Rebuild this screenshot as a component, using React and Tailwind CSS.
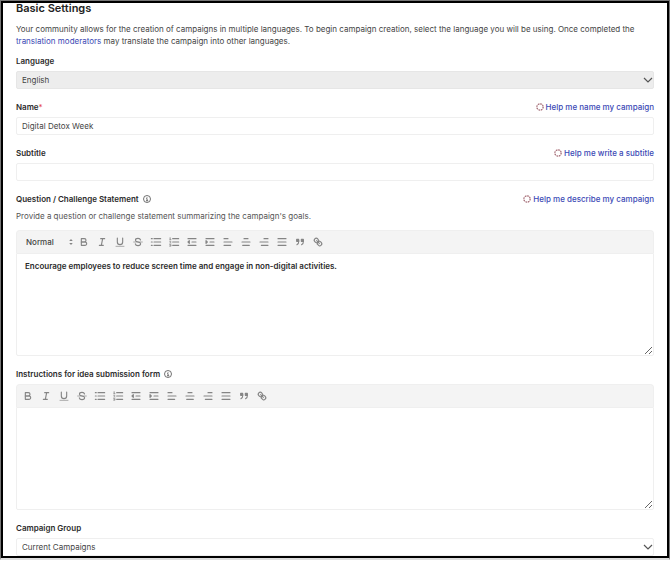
import React from "react";

const ICONS = {
  Bold: (
    <>
      <path d="M5,4H9.5A2.5,2.5,0,0,1,12,6.5v0A2.5,2.5,0,0,1,9.5,9H5A0,0,0,0,1,5,9V4A0,0,0,0,1,5,4Z" />
      <path d="M5,9h5.5A2.5,2.5,0,0,1,13,11.5v0A2.5,2.5,0,0,1,10.5,14H5a0,0,0,0,1,0,0V9A0,0,0,0,1,5,9Z" />
    </>
  ),
  Italic: <path d="M7 4H13M5 14H11M8 14L10 4" />,
  Underline: (
    <>
      <path d="M5,3V9a4.012,4.012,0,0,0,4,4H9a4.012,4.012,0,0,0,4-4V3" />
      <path d="M3 15.5H15" strokeWidth="1" />
    </>
  ),
  Strikethrough: (
    <>
      <path d="M2.5 9H15.5" strokeWidth="1" />
      <path d="M12.8 6C12.3 4.2 10.9 3.6 9 3.6C6.6 3.6 5.2 4.8 5.2 6.4C5.2 8 6.8 8.6 9 9C11.4 9.4 12.9 10.1 12.9 11.7C12.9 13.4 11.3 14.4 9 14.4C6.8 14.4 5.3 13.6 5 11.8" />
    </>
  ),
  "Bulleted list": <path d="M6 4H16M6 9H16M6 14H16M2 4H3.4M2 9H3.4M2 14H3.4" />,
  "Numbered list": (
    <>
      <path d="M7 4H16M7 9H16M7 14H16" />
      <path d="M2.5 5.5H4.5M3.5 5.5V2.5L2.5 3M2.5 8H4.3V9L2.5 10.5H4.5M2.5 12.8H4.4V15.4H2.5M3 14H4.4" strokeWidth="1" />
    </>
  ),
  Outdent: <path d="M3 14H15M3 4H15M9 9H15M5 7V11L3 9Z" />,
  Indent: <path d="M3 14H15M3 4H15M9 9H15M3 7V11L5 9Z" />,
  "Align left": <path d="M3 9H15M3 14H13M3 4H9" />,
  "Align center": <path d="M15 9H3M14 14H4M12 4H6" />,
  "Align right": <path d="M15 9H3M15 14H5M15 4H9" />,
  Justify: <path d="M15 9H3M15 14H3M15 4H3" />,
  Quote: (
    <>
      <path d="M4 5H7V8H4ZM11 5H14V8H11Z" fill="currentColor" />
      <path d="M7.3 7C7.3 10 6.5 12 4.3 13M14.3 7C14.3 10 13.5 12 11.3 13" strokeWidth="1.6" />
    </>
  ),
  Link: (
    <>
      <path d="M7 7L11 11" />
      <path d="M8.9 4.577a3.476 3.476 0 0 1 .36 4.679A3.476 3.476 0 0 1 4.577 8.9C3.185 7.5 2.035 6.4 4.217 4.217S7.5 3.185 8.9 4.577Z" />
      <path d="M13.423 9.1a3.476 3.476 0 0 0-4.679-.36 3.476 3.476 0 0 0 .36 4.679c1.392 1.392 2.5 2.542 4.679.36S14.815 10.5 13.423 9.1Z" />
    </>
  ),
};

function ToolIcon({ name }) {
  return (
    <svg viewBox="0 0 18 18" className="size-3" fill="none" stroke="currentColor" strokeWidth="1.7" strokeLinecap="round" strokeLinejoin="round" aria-hidden="true">
      {ICONS[name]}
    </svg>
  );
}

function Toolbar({ withFormat }) {
  return (
    <div className="flex h-[23px] items-center rounded-t-sm border border-b-0 border-[#efefef] bg-[#f4f4f4] px-[2px] text-[#858585]">
      {withFormat && (
        <div className="relative ml-[7px] w-[49px] shrink-0">
          <select aria-label="Text format" className="block w-full appearance-none bg-transparent text-[8px] leading-3 font-medium text-[#444] outline-none">
            <option>Normal</option>
          </select>
          <svg viewBox="0 0 18 18" className="pointer-events-none absolute top-[2px] right-0 size-2" fill="currentColor" aria-hidden="true">
            <path d="M5 11.5L9 16L13 11.5ZM5 6.5L9 2L13 6.5Z" />
          </svg>
        </div>
      )}
      {Object.keys(ICONS).map((name) => (
        <button key={name} type="button" aria-label={name} className="flex h-4 w-[18px] shrink-0 items-center justify-center">
          <ToolIcon name={name} />
        </button>
      ))}
    </div>
  );
}

function InfoIcon() {
  return (
    <svg viewBox="0 0 16 16" className="size-2 text-[#444]" fill="none" stroke="currentColor" strokeWidth="1.5" aria-hidden="true">
      <circle cx="8" cy="8" r="7" />
      <path d="M6.3 7.3H8.2V11.5M6 11.5H10.3M8 4.2V5.7" />
    </svg>
  );
}

function HelpButton({ children }) {
  return (
    <button type="button" className="flex items-center gap-[2px] leading-3 font-medium text-[#3b49b5]">
      <svg viewBox="0 0 16 16" className="size-2" fill="none" strokeWidth="2.2" aria-hidden="true">
        <circle cx="8" cy="8" r="6.3" stroke="#ead0d0" />
        <circle cx="8" cy="8" r="6.3" stroke="#96616f" strokeDasharray="2.6 2.35" />
      </svg>
      {children}
    </button>
  );
}

function FieldHeader({ id, label, required, info, help }) {
  return (
    <div className="flex h-3 items-center justify-between">
      <div className="flex items-center gap-1">
        <label htmlFor={id} className="leading-3 font-semibold text-[#2b2b2b]">
          {label}
          {required && <span className="font-normal text-[#e5484d]">*</span>}
        </label>
        {info && <InfoIcon />}
      </div>
      {help && <HelpButton>{help}</HelpButton>}
    </div>
  );
}

function SelectField({ id, label, value, shaded }) {
  return (
    <div>
      <FieldHeader id={id} label={label} />
      <div className="relative mt-1">
        <select
          id={id}
          className={`block h-[18px] w-full appearance-none rounded-xs border px-[5px] leading-3 outline-none ${
            shaded ? "border-[#e6e6e6] bg-[#ededed]" : "border-[#efefef] bg-white"
          }`}
        >
          <option>{value}</option>
        </select>
        <svg viewBox="0 0 10 10" className="pointer-events-none absolute top-1 right-px size-[10px]" fill="none" stroke="#555" strokeWidth="1.2" aria-hidden="true">
          <path d="M1 3L5 7L9 3" />
        </svg>
      </div>
    </div>
  );
}

function TextField({ id, label, required, help, value }) {
  return (
    <div>
      <FieldHeader id={id} label={label} required={required} help={help} />
      <input id={id} type="text" defaultValue={value} className="mt-1 block h-[18px] w-full rounded-xs border border-[#efefef] bg-white px-[5px] leading-3 outline-none" />
    </div>
  );
}

function EditorField({ id, label, help, description, withFormat, value }) {
  return (
    <div>
      <FieldHeader id={id} label={label} info help={help} />
      {description && <p className="mt-[5px] mb-2 leading-3 text-[#555]">{description}</p>}
      <div className={description ? "" : "mt-1"}>
        <Toolbar withFormat={withFormat} />
        <textarea
          id={id}
          defaultValue={value}
          className="block h-[103px] w-full resize-y rounded-b-xs border border-[#efefef] bg-white px-2 py-[6px] leading-3 font-semibold text-[#2b2b2b] outline-none"
        />
      </div>
    </div>
  );
}

export default function App() {
  return (
    <div className="border border-b-2 border-[#777] border-b-[#ddd] font-['Inter',sans-serif] text-[8px] text-[#444]">
      <main className="border-2 border-black bg-white px-[13px]">
        <h1 className="text-[11px] leading-[10px] font-semibold text-[#222]">Basic Settings</h1>
        <p className="mt-[10px] leading-3">
          Your community allows for the creation of campaigns in multiple languages. To begin campaign creation, select the language you will be using. Once completed the{" "}
          <a href="#moderators" className="text-[#3b49b5]">translation moderators</a> may translate the campaign into other languages.
        </p>
        <form className="mt-2 flex flex-col gap-3">
          <SelectField id="language" label="Language" value="English" shaded />
          <TextField id="name" label="Name" required help="Help me name my campaign" value="Digital Detox Week" />
          <TextField id="subtitle" label="Subtitle" help="Help me write a subtitle" />
          <EditorField
            id="statement"
            label="Question / Challenge Statement"
            help="Help me describe my campaign"
            description="Provide a question or challenge statement summarizing the campaign's goals."
            withFormat
            value="Encourage employees to reduce screen time and engage in non-digital activities."
          />
          <EditorField id="instructions" label="Instructions for idea submission form" />
          <SelectField id="group" label="Campaign Group" value="Current Campaigns" />
        </form>
      </main>
    </div>
  );
}
